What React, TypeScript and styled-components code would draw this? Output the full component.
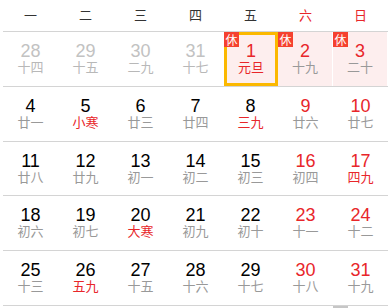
import React from "react";
import styled, { createGlobalStyle } from "styled-components";

const Global = createGlobalStyle`
  html, body { margin: 0; padding: 0; background: #fff; overflow: hidden; }
  body { font-family: "Liberation Sans", Arial, "Noto Sans CJK SC", sans-serif; }
`;

const RED = "#e8262a";
const LINE = "#d4d4d4";

const Calendar = styled.div`
  width: 385px;
  height: 308px;
  margin-left: 3px;
  overflow: hidden;
`;

const HeaderRow = styled.div`
  display: grid;
  grid-template-columns: repeat(7, 55px);
  height: 31px;
  border-bottom: 1px solid ${LINE};
`;

const HeaderCell = styled.div<{ $weekend?: boolean }>`
  text-align: center;
  font-family: "Noto Sans CJK SC", sans-serif;
  font-size: 13px;
  line-height: 30px;
  color: ${(p) => (p.$weekend ? RED : "#333")};
`;

const WeekRow = styled.div`
  display: grid;
  grid-template-columns: repeat(7, 55px);
  height: 53.8px;
  border-bottom: 1px solid ${LINE};
`;

const Cell = styled.div<{ $holiday?: boolean; $selected?: boolean }>`
  position: relative;
  display: flex;
  flex-direction: column;
  align-items: center;
  box-sizing: border-box;
  padding-top: ${(p) => (p.$selected ? 8 : 11)}px;
  margin: ${(p) => (p.$selected ? "0 0 0 1px" : p.$holiday ? "0 1px 0 0" : "0")};
  background: ${(p) => (p.$holiday || p.$selected ? "#fdeeee" : "transparent")};
  border: ${(p) => (p.$selected ? "3px solid #fbb800" : "none")};
`;

const DayNum = styled.div<{ $tone: "muted" | "red" | "normal" }>`
  font-family: "Liberation Sans", Arial, sans-serif;
  font-size: 18px;
  line-height: 17px;
  color: ${(p) => (p.$tone === "muted" ? "#c2c2c2" : p.$tone === "red" ? RED : "#000")};
`;

const Lunar = styled.div<{ $tone: "muted" | "red" | "normal" }>`
  font-family: "Noto Sans CJK SC", sans-serif;
  font-size: 13px;
  line-height: 13px;
  color: ${(p) => (p.$tone === "muted" ? "#b8b8b8" : p.$tone === "red" ? RED : "#999")};
`;

const Badge = styled.div<{ $inset?: boolean }>`
  position: absolute;
  top: ${(p) => (p.$inset ? -3 : 0)}px;
  left: ${(p) => (p.$inset ? -3 : 0)}px;
  width: 15px;
  height: 15px;
  background: #f5412f;
  color: #fff;
  font-family: "Noto Sans CJK SC", sans-serif;
  font-size: 12px;
  line-height: 15px;
  text-align: center;
`;

const WorkMark = styled.div`
  position: absolute;
  top: 0;
  left: 0;
  width: 15px;
  height: 15px;
  background: #c6c6c6;
`;

type Day = {
  d: number;
  l: string;
  muted?: boolean;
  redNum?: boolean;
  redLunar?: boolean;
  holiday?: boolean;
  selected?: boolean;
};

const weeks: Day[][] = [
  [
    { d: 28, l: "十四", muted: true },
    { d: 29, l: "十五", muted: true },
    { d: 30, l: "二九", muted: true },
    { d: 31, l: "十七", muted: true },
    { d: 1, l: "元旦", redNum: true, redLunar: true, holiday: true, selected: true },
    { d: 2, l: "十九", redNum: true, holiday: true },
    { d: 3, l: "二十", redNum: true, holiday: true },
  ],
  [
    { d: 4, l: "廿一" },
    { d: 5, l: "小寒", redLunar: true },
    { d: 6, l: "廿三" },
    { d: 7, l: "廿四" },
    { d: 8, l: "三九", redLunar: true },
    { d: 9, l: "廿六", redNum: true },
    { d: 10, l: "廿七", redNum: true },
  ],
  [
    { d: 11, l: "廿八" },
    { d: 12, l: "廿九" },
    { d: 13, l: "初一" },
    { d: 14, l: "初二" },
    { d: 15, l: "初三" },
    { d: 16, l: "初四", redNum: true },
    { d: 17, l: "四九", redNum: true, redLunar: true },
  ],
  [
    { d: 18, l: "初六" },
    { d: 19, l: "初七" },
    { d: 20, l: "大寒", redLunar: true },
    { d: 21, l: "初九" },
    { d: 22, l: "初十" },
    { d: 23, l: "十一", redNum: true },
    { d: 24, l: "十二", redNum: true },
  ],
  [
    { d: 25, l: "十三" },
    { d: 26, l: "五九", redLunar: true },
    { d: 27, l: "十五" },
    { d: 28, l: "十六" },
    { d: 29, l: "十七" },
    { d: 30, l: "十八", redNum: true },
    { d: 31, l: "十九", redNum: true },
  ],
];

const heads = ["一", "二", "三", "四", "五", "六", "日"];

export default function App() {
  return (
    <>
      <Global />
      <Calendar>
        <HeaderRow>
          {heads.map((h, i) => (
            <HeaderCell key={h} $weekend={i >= 5}>
              {h}
            </HeaderCell>
          ))}
        </HeaderRow>
        {weeks.map((w, wi) => (
          <WeekRow key={wi}>
            {w.map((day, di) => {
              const numTone = day.muted ? "muted" : day.redNum ? "red" : "normal";
              const lunTone = day.muted ? "muted" : day.redLunar ? "red" : "normal";
              return (
                <Cell key={di} $holiday={day.holiday} $selected={day.selected}>
                  {day.holiday && <Badge $inset={day.selected}>休</Badge>}
                  <DayNum $tone={numTone}>{day.d}</DayNum>
                  <Lunar $tone={lunTone}>{day.l}</Lunar>
                </Cell>
              );
            })}
          </WeekRow>
        ))}
        <WeekRow>
          {Array.from({ length: 7 }).map((_, i) => (
            <Cell key={i}>{i === 6 && <WorkMark />}</Cell>
          ))}
        </WeekRow>
      </Calendar>
    </>
  );
}
